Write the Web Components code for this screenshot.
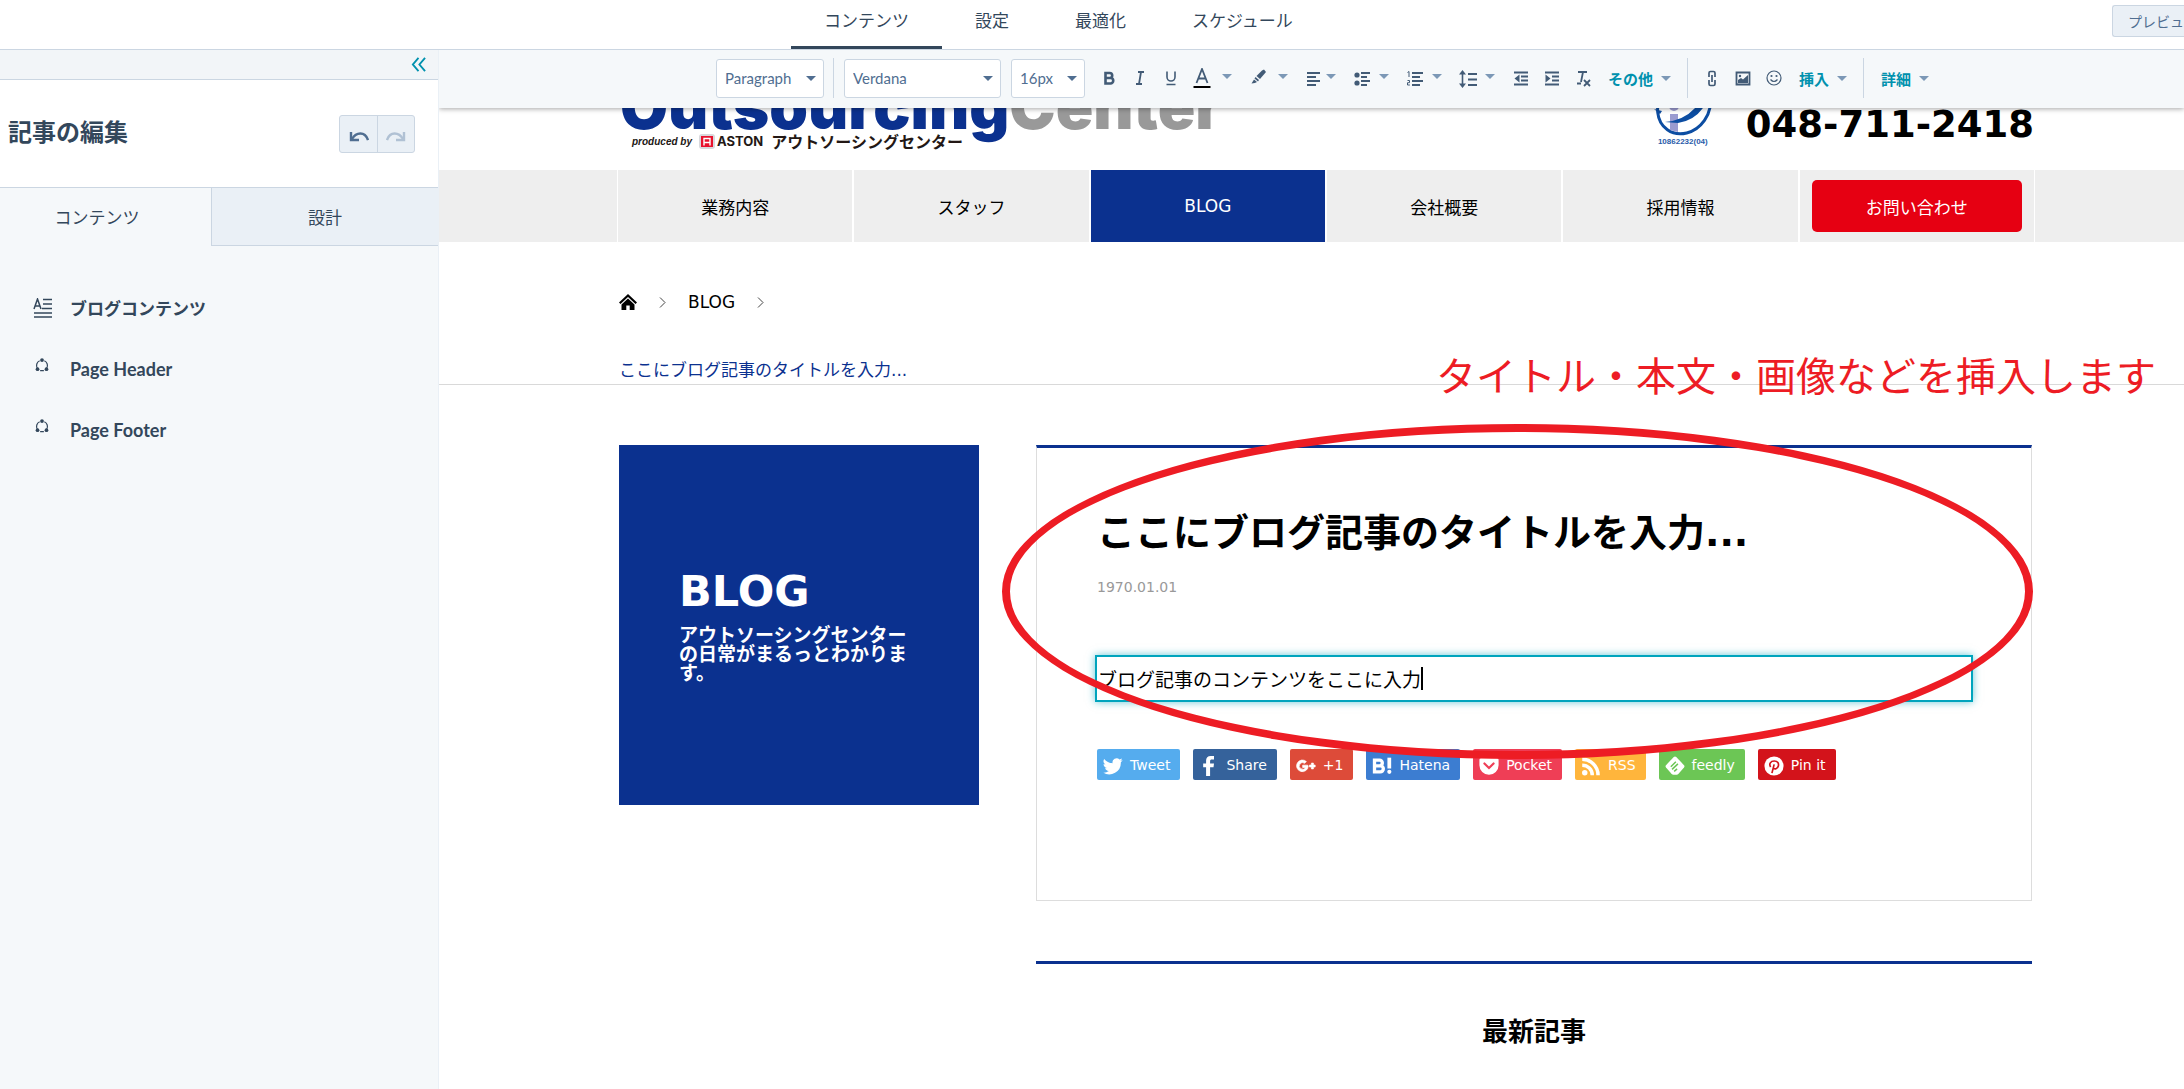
<!DOCTYPE html>
<html lang="ja">
<head>
<meta charset="utf-8">
<title>記事の編集</title>
<style>
  html, body { margin: 0; height: 100%; }
  body {
    --ui: Lato, "Noto Sans CJK JP", sans-serif;
    --site: "DejaVu Sans", "Noto Sans CJK JP", sans-serif;
    --ink: #33475b;
    --line: #cbd6e2;
    --pale: #f5f8fa;
    --brand: #0b318f;
    background: #fff;
    overflow: hidden;
    font-family: var(--ui);
    color: var(--ink);
  }
</style>
</head>
<body>
<blog-editor></blog-editor>

<script>
const ICONS = {
  collapse: ['0 0 16 16', '<path d="M8 1 2 8l6 7M15 1 9 8l6 7" fill="none" stroke="currentColor" stroke-width="2"/>'],
  undo: ['0 0 20 12', '<path d="M2 2v8h8" fill="none" stroke="currentColor" stroke-width="2.4"/><path d="M3 9C7 2 16 1 19 10" fill="none" stroke="currentColor" stroke-width="2.4"/>'],
  redo: ['0 0 20 12', '<path d="M18 2v8h-8" fill="none" stroke="currentColor" stroke-width="2.4"/><path d="M17 9C13 2 4 1 1 10" fill="none" stroke="currentColor" stroke-width="2.4"/>'],
  richtext: ['0 0 20 20', '<path d="M1 11 4.500 1 8 11M2 8h5M10 1.500h9M10 6h9M9 10.500h10M1 15h18M1 19h18" fill="none" stroke="currentColor" stroke-width="1.500"/>'],
  global: ['0 0 14 15', '<path d="M4.500 3A5.500 5.500 0 0 0 2 11M9.500 3A5.500 5.500 0 0 1 12 11M5 13.500h4" fill="none" stroke="currentColor" stroke-width="1.300"/><circle cx="7" cy="2.200" r="2"/><circle cx="2.200" cy="12" r="2"/><circle cx="11.800" cy="12" r="2"/>'],
  caret: ['0 0 10 5', '<path d="M0 0h10L5 5z"/>'],
  bold: ['0 0 18 20', '<path d="M5.500 5h4.200a2.300 2.300 0 0 1 0 5H5.500zM5.500 10h5a2.600 2.600 0 0 1 0 5.500h-5z" fill="none" stroke="currentColor" stroke-width="2.600"/>'],
  italic: ['0 0 18 20', '<path d="M7 4h6M5 16h6M10 4 8 16" fill="none" stroke="currentColor" stroke-width="1.800"/>'],
  underline: ['0 0 18 20', '<path d="M5 3.500V9a4 4 0 0 0 8 0V3.500M4.500 16.500h9" fill="none" stroke="currentColor" stroke-width="1.600"/>'],
  color: ['0 0 18 20', '<path d="M3.500 15 9 1l5.500 14M5 10.500h8" fill="none" stroke="currentColor" stroke-width="1.800"/><path d="M.500 18h17v2H.500z" fill="#000"/>'],
  brush: ['0 0 18 20', '<path d="m15 1.500 2 2.500-6 7-3.500-3L13 2.500z"/><path d="m6.500 9 3.500 3-1 1.500-3.500-3z"/><path d="M5 11.500 8 14q-1.500 1-5.500 1.500z"/>'],
  align: ['0 0 18 20', '<path d="M2 5h13M2 9h9M2 13h13M2 17h9" stroke="currentColor" stroke-width="1.800"/>'],
  bullets: ['0 0 18 20', '<circle cx="4" cy="7" r="2.600"/><circle cx="4" cy="15" r="2.600"/><path d="M8 5h9M8 9h6M8 13h9M8 17h6" stroke="currentColor" stroke-width="1.800"/>'],
  numbers: ['0 0 18 20', '<path d="M1.500 4.500 3 3.500V9M1.500 12.500h2v2.200h-2V17h2.400" fill="none" stroke="currentColor"/><path d="M6 5h11M6 9h8M6 13h11M6 17h8" stroke="currentColor" stroke-width="1.800"/>'],
  height: ['0 0 18 20', '<path d="M3.500 4v14" stroke="currentColor" stroke-width="1.600"/><path d="M0 6.500 3.500 2 7 6.500zM0 15.500 3.500 20 7 15.500z"/><path d="M9 6h9M9 11.500h9M9 17h9" stroke="currentColor" stroke-width="2"/>'],
  outdent: ['0 0 18 20', '<path d="M2 4.500h14M9 8.500h7M9 12.500h7M2 16.500h14" stroke="currentColor" stroke-width="1.800"/><path d="M7.500 6.500v8l-5-4z"/>'],
  indent: ['0 0 18 20', '<path d="M2 4.500h14M9 8.500h7M9 12.500h7M2 16.500h14" stroke="currentColor" stroke-width="1.800"/><path d="M2.500 6.500v8l5-4z"/>'],
  clear: ['0 0 18 20', '<path d="M4 4h9M9 4 7 14M3 15.500h4M10 12l6 6M16 12l-6 6" fill="none" stroke="currentColor" stroke-width="1.800"/>'],
  link: ['0 0 18 20', '<path d="M6 9V5q0-1.500 1.500-1.500h3Q12 3.500 12 5v4M6 12v4q0 1.500 1.500 1.500h3Q12 17.500 12 16v-4M9 7v7" fill="none" stroke="currentColor" stroke-width="1.700"/>'],
  image: ['0 0 18 20', '<path d="M2.500 4.500h13v12h-13z" fill="none" stroke="currentColor" stroke-width="1.800"/><path d="M4 15v-3l3-2 2 1.500L14 7v8z"/><circle cx="6" cy="8" r="1.200"/>'],
  smile: ['0 0 18 20', '<circle cx="9" cy="10" r="7" fill="none" stroke="currentColor" stroke-width="1.200"/><circle cx="6.500" cy="8" r="1.100"/><circle cx="11.500" cy="8" r="1.100"/><path d="M5.500 11.500q3.500 4 7 0" fill="none" stroke="currentColor" stroke-width="1.200"/>'],
  home: ['0 0 18 16', '<path d="M9 0 0 8.500 1.500 10 9 3l7.500 7L18 8.500z"/><path d="M9 4.500 2.500 10.500V16h4.800v-4.500h3.400V16h4.800v-5.500z"/>'],
  chevron: ['0 0 7 11', '<path d="M1 0.500 6 5.500 1 10.500" fill="none" stroke="currentColor"/>'],
  twitter: ['0 0 24 24', '<path d="M23.600 4.900a9.700 9.700 0 0 1-2.800.8 4.900 4.900 0 0 0 2.100-2.700 9.700 9.700 0 0 1-3.100 1.200 4.900 4.900 0 0 0-8.300 4.500A13.900 13.900 0 0 1 1.400 3.600a4.900 4.900 0 0 0 1.500 6.500 4.900 4.900 0 0 1-2.200-.6 4.900 4.900 0 0 0 3.900 4.900 4.900 4.900 0 0 1-2.200.1 4.900 4.900 0 0 0 4.600 3.400A9.800 9.800 0 0 1 0 19.900a13.900 13.900 0 0 0 21.400-12.400 9.900 9.900 0 0 0 2.200-2.600z"/>'],
  facebook: ['0 0 24 24', '<path d="M8.500 24V13.500H5V9h3.500V5.500C8.500 2 10.500 0 14 0h4v4.300h-2.500c-1.700 0-2.200.7-2.200 2.200V9H18l-.600 4.500h-4.100V24z"/>'],
  google: ['0 0 24 24', '<path d="M14 11H8v2.800h3.300A3.900 3.900 0 1 1 10.300 8.800l2.200-2.100A7 7 0 1 0 14.700 12zM18.500 8.500v2.300h-2.300v2.400h2.300v2.300h2.400v-2.300H23v-2.400h-2.100V8.500z" stroke="currentColor" stroke-width=".8"/>'],
  hatena: ['0 0 24 24', '<path d="M3 5h6a3.300 3.300 0 0 1 0 6.800H3zM3 11.800h7a3.600 3.600 0 0 1 0 7.200H3z" fill="none" stroke="currentColor" stroke-width="4"/><path d="M18.500 2h4.500v13h-4.500z"/><circle cx="20.800" cy="19" r="2.500"/>'],
  pocket: ['0 0 24 24', '<path d="M2.500 2.500h19A2 2 0 0 1 23.500 4.500V11a11.500 11.500 0 0 1-23 0V4.500A2 2 0 0 1 2.500 2.500z"/><path d="m6.500 9 5.500 5.500L17.500 9" fill="none" stroke="#ef3e56" stroke-width="2.600" stroke-linecap="round"/>'],
  rss: ['0 0 24 24', '<circle cx="4.500" cy="20" r="3.300"/><path d="M1.500 11a12 12 0 0 1 12 12M1.500 4a19 19 0 0 1 19 19" fill="none" stroke="currentColor" stroke-width="4.200"/>'],
  feedly: ['0 0 24 24', '<path d="M10.500 1.200q1.500-1.400 3 0l9.300 9.800q1.200 1.400 0 2.800L16 21.500q-.800.900-2 .900h-4q-1.200 0-2-.900L1.200 13.800q-1.200-1.400 0-2.800z"/><path d="m7 13 6-6M8.500 16l7-6.500M11 18.500l3.500-3" stroke="#6cc655" stroke-width="1.800"/>'],
  pinterest: ['0 0 24 24', '<circle cx="12" cy="12" r="11.500"/><path d="m9.500 20.500 2.700-10.500M8 13.200C5.500 9.500 8 6 12.300 6c4.200 0 5.700 3 4.900 6-.8 3.300-4.600 4.500-5.900 2.200" fill="none" stroke="#d3131b" stroke-width="2"/>'],
};

function define(name, html, setup) {
  const template = document.createElement('template');
  template.innerHTML = html;
  customElements.define(name, class extends HTMLElement {
    constructor() {
      super();
      this.attachShadow({ mode: 'open' }).append(template.content.cloneNode(true));
    }
    connectedCallback() { if (setup) setup(this, this.shadowRoot); }
  });
}

define('ui-icon', `
<style>
  :host { display: block; flex: none; width: 18px; height: 20px; }
  svg { display: block; width: 100%; height: 100%; fill: currentColor; }
</style>
<svg aria-hidden="true"></svg>`, (el, root) => {
  const [box, body] = ICONS[el.getAttribute('name')];
  const svg = root.querySelector('svg');
  svg.setAttribute('viewBox', box);
  svg.innerHTML = body;
});

/* ---------- top bar ---------- */
define('top-tab', `
<style>
  :host { display: block; }
  a { display: block; box-sizing: border-box; height: 49px; padding: 0 33px; line-height: 42px;
      font-size: 17px; color: var(--ink); text-decoration: none; }
  :host([active]) a { border-bottom: 3px solid var(--ink); border-radius: 3px 3px 0 0; }
</style>
<a href="#"><slot></slot></a>`);

define('top-bar', `
<style>
  :host { display: flex; align-items: flex-start; border-bottom: 1px solid var(--line); background: #fff; }
  nav { display: flex; flex: 1; padding-left: 791px; }
  button { margin-top: 5px; height: 32px; padding: 0 0 0 15px; border: 1px solid var(--line); border-right: 0;
           border-radius: 3px 0 0 3px; background: #eaf0f6; color: #506e91; font: 14px var(--ui); white-space: nowrap; }
</style>
<nav>
  <top-tab active>コンテンツ</top-tab><top-tab>設定</top-tab><top-tab>最適化</top-tab><top-tab>スケジュール</top-tab>
</nav>
<button type="button">プレビュ</button>`);

/* ---------- side panel ---------- */
define('panel-item', `
<style>
  :host { display: block; }
  a { display: flex; align-items: center; height: 61px; color: var(--ink); text-decoration: none;
      font-size: 17px; font-weight: 700; }
  :host([icon=global]) a { font-size: 18px; }
  .icon { width: 37px; }
  ui-icon { width: 14px; height: 14px; margin: 0 0 8px 2px; }
  ui-icon[name=richtext] { width: 20px; height: 20px; margin: 0; }
</style>
<a href="#"><span class="icon"></span><slot></slot></a>`, (el, root) => {
  root.querySelector('.icon').innerHTML = `<ui-icon name="${el.getAttribute('icon')}"></ui-icon>`;
});

define('side-panel', `
<style>
  :host { display: flex; flex-direction: column; flex: none; box-sizing: border-box; width: 439px;
          border-right: 1px solid #eaf0f6; background: var(--pale); }
  button { display: flex; align-items: center; justify-content: center; padding: 0; border: 0; background: none; }
  .strip { display: flex; justify-content: flex-end; padding: 0 12px; height: 29px;
           border-bottom: 1px solid var(--line); background: #f2f5f8; }
  .strip button { color: #0091ae; }
  .strip ui-icon { width: 15px; height: 15px; }
  header { display: flex; align-items: center; justify-content: space-between; height: 107px;
           padding: 0 23px 0 8px; border-bottom: 1px solid var(--line); background: #fff; }
  h1 { margin: 0 0 4px; font-size: 24px; line-height: 36px; }
  .history { display: flex; border: 1px solid var(--line); border-radius: 3px; background: #eaf0f6; }
  .history button { width: 37px; height: 36px; color: #506e91; }
  .history button + button { border-left: 1px solid var(--line); color: #b0c1d4; }
  .history ui-icon { width: 20px; height: 12px; margin-top: 4px; }
  .tabs { display: grid; grid-template-columns: 211px 1fr; }
  .tabs button { height: 58px; font: 17px var(--ui); color: var(--ink);
                 border-left: 1px solid var(--line); border-bottom: 1px solid var(--line); background: #eaf0f6; }
  .tabs button:first-child { padding-right: 18px; border-color: transparent; background: none; }
  .items { padding: 31px 33px 0; }
</style>
<div class="strip"><button type="button" aria-label="折りたたむ"><ui-icon name="collapse"></ui-icon></button></div>
<header>
  <h1>記事の編集</h1>
  <div class="history">
    <button type="button" aria-label="元に戻す"><ui-icon name="undo"></ui-icon></button>
    <button type="button" aria-label="やり直す"><ui-icon name="redo"></ui-icon></button>
  </div>
</header>
<div class="tabs"><button type="button">コンテンツ</button><button type="button">設計</button></div>
<div class="items">
  <panel-item icon="richtext">ブログコンテンツ</panel-item>
  <panel-item icon="global">Page Header</panel-item>
  <panel-item icon="global">Page Footer</panel-item>
</div>`);

/* ---------- toolbar ---------- */
define('tool-select', `
<style>
  :host { display: grid; align-items: center; height: 39px; }
  select, ui-icon { grid-area: 1 / 1; }
  select { appearance: none; box-sizing: border-box; width: 100%; height: 100%; padding: 0 24px 0 8px;
           border: 1px solid var(--line); border-radius: 3px; background: #fff; color: #506e91; font: 15px var(--ui); }
  ui-icon { justify-self: end; width: 10px; height: 5px; margin-right: 8px; color: #506e91; pointer-events: none; }
</style>
<select></select><ui-icon name="caret"></ui-icon>`, (el, root) => {
  const select = root.querySelector('select');
  select.setAttribute('aria-label', el.getAttribute('label'));
  select.append(new Option(el.getAttribute('value')));
});

define('tool-button', `
<style>
  :host { display: block; width: 31px; }
  button { display: flex; align-items: center; width: 100%; height: 40px; padding: 0 0 0 6px; border: 0;
           background: none; color: #425b76; }
  .caret { width: 10px; height: 5px; margin: 0 0 3px auto; color: #7c98b6; display: none; }
  :host([menu]) .caret { display: block; }
  :host([menu]) button { padding-right: 11px; }
</style>
<button type="button"><span></span><ui-icon class="caret" name="caret"></ui-icon></button>`, (el, root) => {
  root.querySelector('span').innerHTML = `<ui-icon name="${el.getAttribute('icon')}"></ui-icon>`;
  root.querySelector('button').setAttribute('aria-label', el.getAttribute('icon'));
});

define('text-menu', `
<style>
  :host { display: block; }
  button { display: flex; align-items: center; gap: 8px; height: 40px; padding: 0; border: 0; background: none;
           color: #0091ae; font: 700 15px var(--ui); white-space: nowrap; }
  ui-icon { width: 10px; height: 5px; color: #7c98b6; }
</style>
<button type="button"><slot></slot><ui-icon name="caret"></ui-icon></button>`);

define('editor-toolbar', `
<style>
  :host { display: flex; align-items: center; box-sizing: border-box; height: 58px; padding: 0 0 2px 277px;
          background: var(--pale); position: relative; z-index: 1; box-shadow: 0 1px 5px rgba(0, 0, 0, .35);
          clip-path: inset(0 0 -10px 0); }
  i { width: 1px; height: 40px; background: var(--line); }
  .group { display: flex; align-items: center; }
  .wide { width: 56px; } .mid { width: 53px; } .slim { width: 48px; }
  .style { width: 108px; margin-right: 9px; }
  .family { width: 157px; margin: 0 10px; }
  .size { width: 74px; margin-right: 9px; }
  .more { margin: 0 16px 0 9px; }
  .insert { margin: 0 16px 0 9px; }
  .detail { margin-left: 17px; }
  .insertions { margin-left: 9px; }
</style>
<tool-select class="style" label="段落" value="Paragraph"></tool-select><i></i>
<tool-select class="family" label="フォント" value="Verdana"></tool-select>
<tool-select class="size" label="サイズ" value="16px"></tool-select>
<div class="group">
  <tool-button icon="bold"></tool-button><tool-button icon="italic"></tool-button><tool-button icon="underline"></tool-button>
  <tool-button icon="color" class="wide" menu></tool-button><tool-button icon="brush" class="wide" menu></tool-button>
  <tool-button icon="align" class="slim" menu></tool-button><tool-button icon="bullets" class="mid" menu></tool-button>
  <tool-button icon="numbers" class="mid" menu></tool-button><tool-button icon="height" class="mid" menu></tool-button>
  <tool-button icon="outdent"></tool-button><tool-button icon="indent"></tool-button><tool-button icon="clear"></tool-button>
</div>
<text-menu class="more">その他</text-menu><i></i>
<div class="group insertions">
  <tool-button icon="link"></tool-button><tool-button icon="image"></tool-button><tool-button icon="smile"></tool-button>
</div>
<text-menu class="insert">挿入</text-menu><i></i>
<text-menu class="detail">詳細</text-menu>`);

/* ---------- edited page ---------- */
define('site-header', `
<style>
  :host { display: flex; align-items: flex-end; justify-content: space-between; box-sizing: border-box;
          height: 62px; padding: 0 150px 20px 181px; font-family: var(--site); }
  .word { font: 900 62px/62px Inter, sans-serif; color: var(--brand); white-space: nowrap; }
  .word span { color: #999; }
  .tag { display: flex; align-items: center; height: 18px; margin-top: -6px; padding-left: 12px;
         color: #231815; white-space: nowrap; }
  .by { margin-right: 7px; font: italic 700 10px "Liberation Sans", sans-serif; }
  .tag svg { width: 16px; height: 15px; margin-right: 2px; }
  .aston { margin-right: 8px; font: 700 13px Inter, sans-serif; }
  .kana { font: 700 16px "Noto Sans CJK JP", sans-serif; }
  .contact { display: flex; align-items: flex-end; gap: 34px; }
  .mark { width: 58px; text-align: center; font: 700 8px/10px "Liberation Sans", sans-serif;
          color: #2a5caa; margin-bottom: 3px; white-space: nowrap; }
  .mark svg { display: block; width: 58px; height: 60px; }
  .tel { margin-bottom: 5px; font-size: 37px; line-height: 40px; font-weight: 700; color: #000; white-space: nowrap; }
</style>
<div>
  <div class="word">Outsourcing<span>Center</span></div>
  <div class="tag">
    <span class="by">produced by</span>
    <svg viewBox="0 0 16 15" aria-hidden="true"><rect width="16" height="15" rx="3" fill="#d8d8dc"/><rect x="2" y="2" width="12" height="11" fill="#e8112d"/><path d="M5 11.500V4.500h6v7M5 8.500h6" fill="none" stroke="#fff" stroke-width="1.400"/></svg>
    <span class="aston">ASTON</span>
    <span class="kana">アウトソーシングセンター</span>
  </div>
</div>
<div class="contact">
  <div class="mark">
    <svg viewBox="0 0 58 60" aria-hidden="true">
      <ellipse cx="30" cy="29" rx="25" ry="29" transform="rotate(35 30 29)" fill="none" stroke="#0c4da2" stroke-width="3"/>
      <circle cx="20" cy="29" r="5" fill="#9a9bd0"/><path d="M16 37h8v18l-8-2z" fill="#9a9bd0"/>
      <path d="M11 45q24-2 36-22l6 1Q44 43 24 46zM0 32l8 2-2 3z" fill="#0c4da2"/>
    </svg>10862232(04)
  </div>
  <div class="tel">048-711-2418</div>
</div>`);

define('nav-cell', `
<style>
  :host { display: block; flex: 1; border: 0 solid #fff; border-width: 0 1px; }
  a { display: flex; align-items: center; justify-content: center; height: 72px; font-size: 17px; color: #000;
      text-decoration: none; }
  :host([active]) a { background: var(--brand); color: #fff; }
  :host([cta]) a { height: 52px; margin: 10px 12px; border-radius: 5px; background: #e60012; color: #fff; }
</style>
<a href="#"><slot></slot></a>`);

define('site-nav', `
<style>:host { display: flex; padding: 0 149px 0 178px; background: #eee; font-family: var(--site); }</style>
<nav-cell>業務内容</nav-cell><nav-cell>スタッフ</nav-cell><nav-cell active>BLOG</nav-cell>
<nav-cell>会社概要</nav-cell><nav-cell>採用情報</nav-cell><nav-cell cta>お問い合わせ</nav-cell>`);

define('bread-crumbs', `
<style>
  :host { display: block; padding: 46px 180px 0; border-bottom: 1px solid #d9d9d9; font: 17px/28px var(--site); color: #000; }
  nav { display: flex; align-items: center; height: 28px; }
  a { color: inherit; text-decoration: none; }
  ui-icon { width: 7px; height: 11px; color: #444; margin: 0 22px; }
  ui-icon[name=home] { width: 18px; height: 16px; margin: 0; color: #000; }
  div { margin-top: 40px; color: var(--brand); }
</style>
<nav><a href="#" aria-label="ホーム"><ui-icon name="home"></ui-icon></a><ui-icon name="chevron"></ui-icon><a href="#">BLOG</a><ui-icon name="chevron"></ui-icon></nav>
<div>ここにブログ記事のタイトルを入力...</div>`);

define('blog-hero', `
<style>
  :host { display: flex; flex-direction: column; justify-content: center; box-sizing: border-box; flex: none;
          width: 360px; height: 360px; padding: 0 60px; background: var(--brand); color: #fff; }
  h2 { margin: 0 0 11px; font-size: 43px; line-height: 48px; }
  p { margin: 0; font-size: 19px; line-height: 19px; font-weight: 700; }
</style>
<h2>BLOG</h2><p>アウトソーシングセンターの日常がまるっとわかります。</p>`);

define('share-button', `
<style>
  :host { display: block; }
  a { display: flex; align-items: center; gap: 7px; height: 31px; padding: 0 10px 0 6px; border-radius: 2px;
      font-size: 14px; color: #fff; text-decoration: none; white-space: nowrap; }
  ui-icon { width: 20px; height: 20px; margin-top: 3px; }
</style>
<a href="#"><span></span><slot></slot></a>`, (el, root) => {
  root.querySelector('span').innerHTML = `<ui-icon name="${el.getAttribute('icon')}"></ui-icon>`;
  root.querySelector('a').style.background = el.getAttribute('color');
});

define('article-card', `
<style>
  :host { display: block; border: 1px solid #ddd; border-top: 3px solid var(--brand); padding: 57px 60px 120px; }
  h1 { margin: 0; font-size: 38px; line-height: 56px; }
  time { display: block; margin-top: 16px; font-size: 14px; line-height: 20px; color: #999; }
  .field { display: flex; align-items: center; box-sizing: border-box; height: 47px; margin: 58px -2px 47px; padding-left: 1px;
           border: 2px solid #00a4bd; box-shadow: 0 0 8px rgba(0, 164, 189, .6); }
  input { width: 17em; height: 40px; padding: 0; border: 0; outline: 0; background: none; color: #000; font: 19px var(--site); }
  .cursor { width: 2px; height: 23px; background: #000; }
  .share { display: flex; gap: 13px; }
</style>
<h1>ここにブログ記事のタイトルを入力...</h1>
<time datetime="1970-01-01">1970.01.01</time>
<div class="field"><input type="text" aria-label="記事の本文" value="ブログ記事のコンテンツをここに入力"><span class="cursor"></span></div>
<div class="share">
  <share-button icon="twitter" color="#55acee">Tweet</share-button>
  <share-button icon="facebook" color="#35629b">Share</share-button>
  <share-button icon="google" color="#dd4b39">+1</share-button>
  <share-button icon="hatena" color="#3c7dd1">Hatena</share-button>
  <share-button icon="pocket" color="#ef3e56">Pocket</share-button>
  <share-button icon="rss" color="#ffb53c">RSS</share-button>
  <share-button icon="feedly" color="#6cc655">feedly</share-button>
  <share-button icon="pinterest" color="#d3131b">Pin it</share-button>
</div>`);

define('latest-posts', `
<style>
  :host { display: block; margin-top: 60px; padding-top: 48px; border-top: 3px solid var(--brand); }
  h2 { margin: 0; font-size: 26px; line-height: 40px; text-align: center; }
</style>
<h2>最新記事</h2>`);

/* Hand-drawn style note that floats over the page. */
define('note-overlay', `
<style>
  :host { position: absolute; inset: 0; pointer-events: none; color: #ed1c24; }
  p { position: absolute; left: 997px; top: 236px; margin: 0; font: 40px/60px "Noto Sans CJK JP", sans-serif; white-space: nowrap; }
  div { position: absolute; left: 563px; top: 316px; width: 1031px; height: 335px; box-sizing: border-box;
        border: 8px solid currentColor; border-radius: 50%; }
</style>
<p>タイトル・本文・画像などを挿入します</p><div></div>`);

define('page-canvas', `
<style>
  :host { display: block; position: relative; flex: 1; overflow: hidden; background: #fff; color: #000; font-family: var(--site); }
  main { display: flex; align-items: flex-start; gap: 57px; padding: 60px 152px 0 180px; }
  section { flex: 1; }
</style>
<site-header></site-header>
<site-nav></site-nav>
<bread-crumbs></bread-crumbs>
<main>
  <blog-hero></blog-hero>
  <section><article-card></article-card><latest-posts></latest-posts></section>
</main>
<note-overlay></note-overlay>`);

define('blog-editor', `
<style>
  :host { display: flex; flex-direction: column; height: 100vh; }
  .work { display: flex; flex: 1; min-height: 0; }
  .stage { display: flex; flex-direction: column; flex: 1; min-width: 0; }
</style>
<top-bar></top-bar>
<div class="work">
  <side-panel></side-panel>
  <div class="stage"><editor-toolbar></editor-toolbar><page-canvas></page-canvas></div>
</div>`);
</script>
</body>
</html>
